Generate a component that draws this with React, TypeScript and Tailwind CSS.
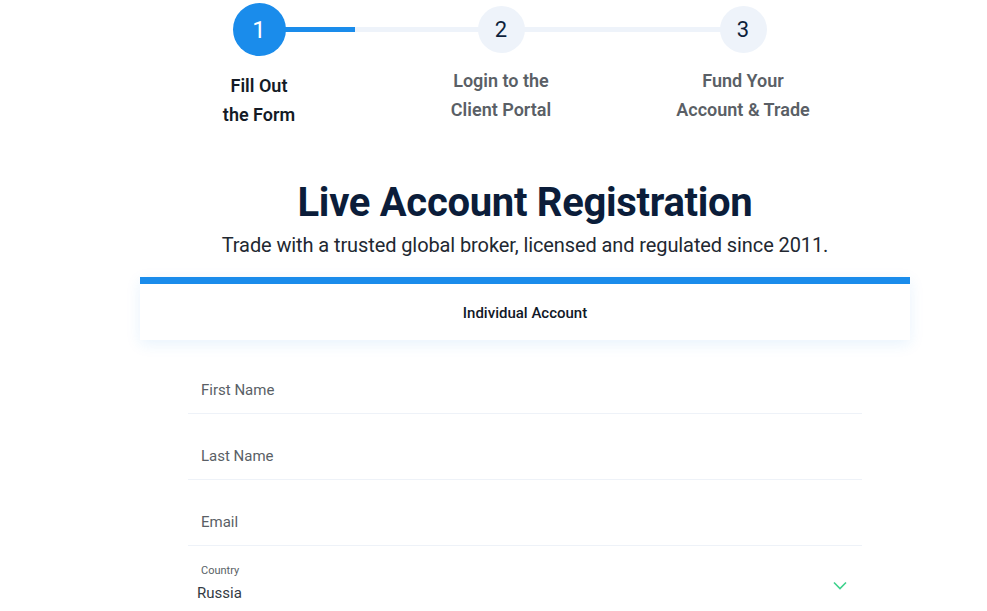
import React from "react";

const font = { fontFamily: 'Roboto, "Noto Sans", sans-serif' };

const steps = [
  { n: "1", lines: ["Fill Out", "the Form"], active: true },
  { n: "2", lines: ["Login to the", "Client Portal"], active: false },
  { n: "3", lines: ["Fund Your", "Account & Trade"], active: false },
];

const Field = ({ label }: { label: string }) => (
  <div className="h-[66px] border-b border-[#eef2f8] flex items-end pb-[12px] pl-[13px]">
    <span className="text-[15px] text-[#5a5f66]">{label}</span>
  </div>
);

export default function App() {
  return (
    <div className="min-h-screen bg-white text-[#0d1f3c]" style={font}>
      {/* Stepper */}
      <div className="relative ml-[138px] w-[726px] pt-[3px]">
        <div className="absolute left-[121px] right-[121px] top-[27px] h-[5px] bg-[#eef3fa]" />
        <div className="absolute left-[121px] w-[96px] top-[27px] h-[5px] bg-[#1a8ceb]" />
        <div className="relative grid grid-cols-3">
          {steps.map((s) => (
            <div key={s.n} className="flex flex-col items-center">
              {s.active ? (
                <div className="w-[53px] h-[53px] rounded-full bg-[#1a8ceb] text-white text-[24px] flex items-center justify-center">
                  {s.n}
                </div>
              ) : (
                <div className="mt-[3px] w-[47px] h-[47px] rounded-full bg-[#eef3fa] text-[#0d1f3c] text-[22px] flex items-center justify-center">
                  {s.n}
                </div>
              )}
              <div
                className={
                  s.active
                    ? "mt-[15px] text-center text-[18px] leading-[29px] font-semibold text-[#141b26]"
                    : "mt-[13px] text-center text-[18px] leading-[29px] font-semibold text-[#5a5f66]"
                }
              >
                {s.lines[0]}
                <br />
                {s.lines[1]}
              </div>
            </div>
          ))}
        </div>
      </div>

      {/* Heading */}
      <div className="ml-[140px] w-[770px]">
        <h1 className="mt-[49px] text-center text-[40px] leading-[50px] font-bold tracking-[-0.3px] text-[#0b1d3a]">
          Live Account Registration
        </h1>
        <p className="mt-[4px] text-center text-[20px] leading-[26px] tracking-[-0.1px] text-[#222831]">
          Trade with a trusted global broker, licensed and regulated since 2011.
        </p>

        {/* Tab card */}
        <div className="mt-[19px] bg-white shadow-[0_4px_14px_rgba(26,140,235,0.10)]">
          <div className="h-[7px] bg-[#1a8ceb]" />
          <div className="h-[56px] flex items-center justify-center pt-[2px] text-[15px] font-medium text-[#111827]">
            Individual Account
          </div>
        </div>

        {/* Form */}
        <div className="mx-[48px] mt-[8px]">
          <Field label="First Name" />
          <Field label="Last Name" />
          <Field label="Email" />
          <div className="relative pt-[18px] pl-[9px]">
            <div className="pl-[4px] text-[11px] leading-[14px] text-[#5a5f66]">Country</div>
            <div className="mt-[6px] text-[15px] leading-[18px] text-[#333a44]">Russia</div>
            <svg
              className="absolute right-[15px] top-[35px]"
              width="14"
              height="9"
              viewBox="0 0 14 9"
              fill="none"
              stroke="#3dd28c"
              strokeWidth="1.6"
            >
              <path d="M1 1.5l6 6 6-6" />
            </svg>
          </div>
        </div>
      </div>
    </div>
  );
}
